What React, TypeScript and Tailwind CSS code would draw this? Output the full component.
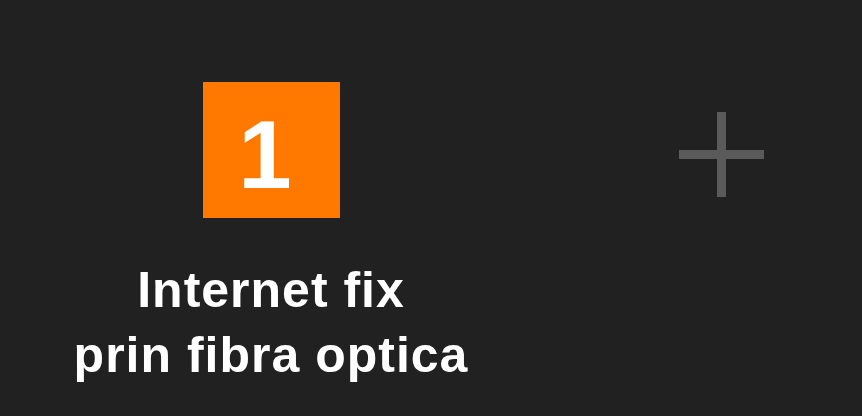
import React from "react";

export default function App() {
  return (
    <div
      className="w-[862px] h-[416px] bg-[#212121] flex overflow-hidden"
      style={{ fontFamily: '"Liberation Sans", Arial, sans-serif' }}
    >
      <div className="w-[542px] flex flex-col items-center pt-[82px]">
        <div className="w-[137px] h-[136px] bg-[#ff7900] flex items-center justify-center">
          <span className="text-white font-bold text-[96px] leading-none mt-[9px] mr-[12px]">1</span>
        </div>
        <div className="mt-[40px] text-white font-bold text-[50px] leading-[65px] tracking-[1px] text-center">
          <div>Internet fix</div>
          <div>prin fibra optica</div>
        </div>
      </div>
      <div className="pt-[112px] pl-[137px]">
        <div className="relative w-[85px] h-[85px]">
          <div className="absolute left-[38px] top-0 w-[9px] h-[85px] bg-[#5a5a5a]" />
          <div className="absolute top-[38px] left-0 h-[9px] w-[85px] bg-[#5a5a5a]" />
        </div>
      </div>
    </div>
  );
}
